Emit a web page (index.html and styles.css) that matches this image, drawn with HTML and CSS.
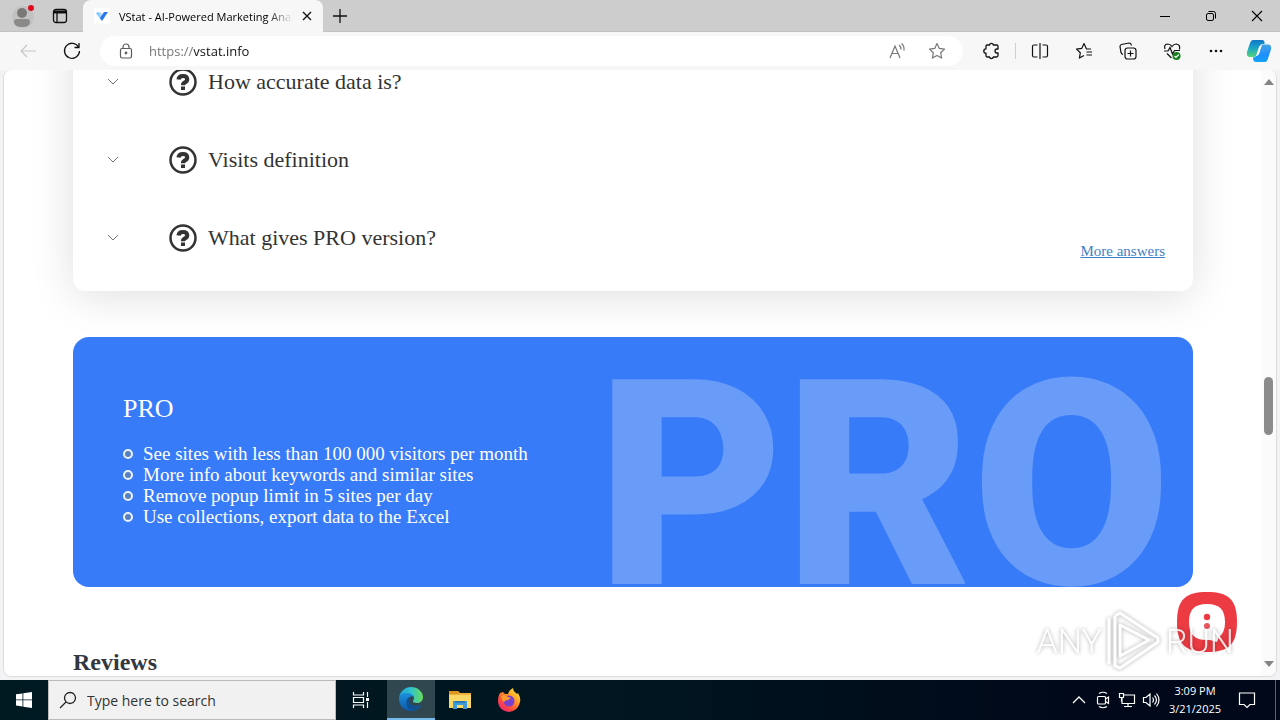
FILE: index.html
```html
<!DOCTYPE html>
<html lang="en">
<head>
<meta charset="utf-8">
<title>VStat - AI-Powered Marketing Analytics</title>
<link rel="stylesheet" href="styles.css">
</head>
<body>
<header class="titlebar">
  <button class="icon-btn profile" aria-label="Profile">
    <svg width="24" height="28" viewBox="0 0 24 28"><circle cx="12" cy="15" r="11" fill="#c2c2c2"/><circle cx="11" cy="11" r="5" fill="#7b7978"/><path d="M3 20q0-3 3-3h10q3 0 3 3 0 5-8 5t-8-5z" fill="#8c8a88"/><circle cx="20" cy="6" r="3" fill="#e00b1c"/></svg>
  </button>
  <button class="icon-btn tab-actions" aria-label="Tab actions">
    <svg width="16" height="16" viewBox="0 0 16 16" fill="none" stroke="#111" stroke-width="1.3"><rect x="1.5" y="1.5" width="13" height="13" rx="2.5"/><path d="M1.5 4h13" stroke-width="3"/><path d="M5 4v10"/></svg>
  </button>
  <div class="tab">
    <svg width="16" height="16" viewBox="0 0 16 16"><rect width="16" height="16" rx="2" fill="#fff"/><path d="M2 5l3-1 3 4-1 4z" fill="#7cc3ff"/><path d="M6 4l2 2-1 5-2-4z" fill="#a8d9ff"/><path d="M10 4l4 0-6 9-2-3z" fill="#2878ee"/></svg>
    <span class="tab-title">VStat - AI-Powered Marketing Analytics</span>
    <button class="icon-btn tab-close" aria-label="Close tab"><svg width="10" height="10" viewBox="0 0 10 10" stroke="#111" stroke-width="1.4"><path d="M1 1l8 8M9 1l-8 8"/></svg></button>
  </div>
  <button class="icon-btn new-tab" aria-label="New tab"><svg width="14" height="14" viewBox="0 0 14 14" stroke="#111" stroke-width="1.3"><path d="M7 0v14M0 7h14"/></svg></button>
  <div class="window-controls">
    <button class="icon-btn" aria-label="Minimize"><svg width="12" height="12" viewBox="0 0 12 12" stroke="#000"><path d="M1 6.500h10"/></svg></button>
    <button class="icon-btn" aria-label="Restore"><svg width="12" height="12" viewBox="0 0 12 12" fill="none" stroke="#000"><rect x="1.500" y="3.500" width="7" height="7" rx="1.500"/><path d="M3.500 1.500h5a2 2 0 0 1 2 2v5"/></svg></button>
    <button class="icon-btn" aria-label="Close"><svg width="12" height="12" viewBox="0 0 12 12" stroke="#000" stroke-width="1.100"><path d="M1 1l10 10M11 1L1 11"/></svg></button>
  </div>
</header>

<nav class="toolbar">
  <button class="icon-btn nav-btn" aria-label="Back"><svg width="18" height="18" viewBox="0 0 18 18" fill="none" stroke="#c6c6c6" stroke-width="1.200"><path d="M17 9H2M8 3L2 9l6 6"/></svg></button>
  <button class="icon-btn nav-btn" aria-label="Refresh"><svg width="18" height="18" viewBox="0 0 18 18" fill="none" stroke="#111" stroke-width="1.300"><path d="M15.500 5A7.500 7.500 0 1 0 16.500 9M16 1v4.500h-4.500"/></svg></button>
  <div class="address">
    <svg width="16" height="18" viewBox="0 0 16 18" fill="none" stroke="#5c5c5c" stroke-width="1.200"><rect x="2.500" y="6.500" width="11" height="9.500" rx="1.500"/><path d="M5 6.500V5a3 3 0 0 1 6 0v1.500"/><circle cx="8" cy="11" r=".8" fill="#5c5c5c"/></svg>
    <input class="url" type="text" aria-label="Address" value="https://vstat.info">
    <button class="icon-btn address-btn" aria-label="Read aloud"><svg width="18" height="18" viewBox="0 0 18 18" fill="none" stroke="#777" stroke-width="1.200"><path d="M2 16L7 4l5 12M4 11.500h6M11 3q2 1.500 2 4.500M13.500 1.500q3 2.500 2.500 7"/></svg></button>
    <button class="icon-btn address-btn" aria-label="Add to favorites"><svg width="18" height="18" viewBox="0 0 18 18" fill="none" stroke="#777" stroke-width="1.200" stroke-linejoin="round"><path d="M9 1.500l2.300 4.900 5.200.700-3.800 3.700.900 5.300L9 13.500l-4.600 2.600.900-5.300L1.500 7.100l5.200-.700z"/></svg></button>
  </div>
  <div class="tools">
    <button class="icon-btn tool" aria-label="Extensions"><svg width="18" height="18" viewBox="0 0 18 18" fill="none" stroke="#111" stroke-width="1.300" stroke-linejoin="round"><path d="M5 3h2.500a2 2 0 0 1 3.900 0h3.100q1.500 0 1.500 1.500V7h-1a2 2 0 0 0 0 4h1v2.500q0 1.500-1.500 1.500h-3.100a2 2 0 0 1-3.900 0H5.500Q4 15 4 13.500V11.200a2.200 2.200 0 0 1 0-4.400V4.500Q4 3 5 3z"/></svg></button>
    <span class="divider"></span>
    <button class="icon-btn tool" aria-label="Split screen"><svg width="18" height="18" viewBox="0 0 18 18" fill="none" stroke="#111" stroke-width="1.200"><path d="M9 1v16M6.500 3H3Q1.500 3 1.500 4.500v9Q1.500 15 3 15h3.500M11.500 3H15q1.500 0 1.500 1.500v9q0 1.500-1.500 1.500h-3.500"/></svg></button>
    <button class="icon-btn tool" aria-label="Favorites"><svg width="18" height="18" viewBox="0 0 18 18" fill="none" stroke="#111" stroke-width="1.200" stroke-linejoin="round"><path d="M16 7h-4.500L9 1.500 6.700 6.400l-5.200.700 3.800 3.700-.900 5.300L9 13.500M11.500 10H17M11.500 13H17"/></svg></button>
    <button class="icon-btn tool" aria-label="Collections"><svg width="18" height="18" viewBox="0 0 18 18" fill="none" stroke="#111" stroke-width="1.200"><rect x="6" y="6" width="11" height="11" rx="2.500"/><path d="M11.500 8.500v6M8.500 11.500h6M4 12.500q-1.500-.500-2-2L1 4.500Q1 3 2.500 2.500L10 1q2 0 2.500 2.500"/></svg></button>
    <button class="icon-btn tool" aria-label="Browser essentials"><svg width="18" height="18" viewBox="0 0 18 18" fill="none" stroke="#111" stroke-width="1.200"><path d="M2 7Q.5 2.500 4.500 2 7.500 2 9 4.500 10.500 2 13.500 2q4 .5 3 5.500M1 9h4l2-3.500L9.500 12l2-3.500H17M4 11.500l4.500 4.500"/><circle cx="13.500" cy="14" r="4" fill="#13801b" stroke="none"/><path d="M11.500 14l1.500 1.500 2.700-3" stroke="#fff"/></svg></button>
    <button class="icon-btn tool" aria-label="Settings and more"><svg width="18" height="18" viewBox="0 0 18 18" fill="#111"><circle cx="4" cy="9" r="1.300"/><circle cx="9" cy="9" r="1.300"/><circle cx="14" cy="9" r="1.300"/></svg></button>
    <button class="icon-btn copilot" aria-label="Copilot"><svg width="26" height="24" viewBox="0 0 26 24"><defs><linearGradient id="cp1" x1="0" y1="0" x2="0" y2="1"><stop offset="0" stop-color="#1276c8"/><stop offset=".45" stop-color="#19a3c8"/><stop offset="1" stop-color="#55d47a"/></linearGradient><linearGradient id="cp2" x1="0" y1="0" x2="0" y2="1"><stop offset="0" stop-color="#47a4e4"/><stop offset=".6" stop-color="#1d8fff"/><stop offset="1" stop-color="#14a4f5"/></linearGradient></defs><path d="M7 1h9q3 0 2.500 4h-2q-2 0-3 3l-2 7q-1 3-4 3H4q-4 0-3-5L4 4q1-3 3-3z" fill="url(#cp1)"/><path d="M19 23h-9q-3 0-3-4.500 3 0 4-3l2.500-7q1-3 4-3H22q4 0 3 5l-3 9q-1 3.500-3 3.500z" fill="url(#cp2)"/><path d="M11 14l2-6q1-2 3-2l-3 9q-1 2-3 2z" fill="#fff"/></svg></button>
  </div>
</nav>

<div class="browser-body">
  <div class="frame">
    <main class="page">
      <section class="faq">
        <div class="faq-row">
          <button class="question"><svg class="chevron" viewBox="0 0 12 8"><path d="M1 1l5 5 5-5"/></svg><svg class="help" viewBox="0 0 28 28"><circle cx="14" cy="14" r="12.500"/><path d="M9.500 11.500Q10 8 14 8t4.200 3.200q0 2-2.200 3.100-2 1-2 3"/><path class="help-dot" d="M12 18.500h4v3.500h-4z"/></svg>How accurate data is?</button>
        </div>
        <div class="faq-row">
          <button class="question"><svg class="chevron" viewBox="0 0 12 8"><path d="M1 1l5 5 5-5"/></svg><svg class="help" viewBox="0 0 28 28"><circle cx="14" cy="14" r="12.500"/><path d="M9.500 11.500Q10 8 14 8t4.200 3.200q0 2-2.200 3.100-2 1-2 3"/><path class="help-dot" d="M12 18.500h4v3.500h-4z"/></svg>Visits definition</button>
        </div>
        <div class="faq-row">
          <button class="question"><svg class="chevron" viewBox="0 0 12 8"><path d="M1 1l5 5 5-5"/></svg><svg class="help" viewBox="0 0 28 28"><circle cx="14" cy="14" r="12.500"/><path d="M9.500 11.500Q10 8 14 8t4.200 3.200q0 2-2.200 3.100-2 1-2 3"/><path class="help-dot" d="M12 18.500h4v3.500h-4z"/></svg>What gives PRO version?</button>
          <a class="more" href="#answers">More answers</a>
        </div>
      </section>

      <section class="pro">
        <div class="pro-info">
          <h2 class="pro-title">PRO</h2>
          <ul class="pro-list">
            <li>See sites with less than 100 000 visitors per month</li>
            <li>More info about keywords and similar sites</li>
            <li>Remove popup limit in 5 sites per day</li>
            <li>Use collections, export data to the Excel</li>
          </ul>
        </div>
        <div class="pro-mark" aria-hidden="true">PRO</div>
      </section>

      <h2 class="reviews">Reviews</h2>
    </main>
    <div class="scrollbar">
      <svg width="10" height="6" viewBox="0 0 10 6" fill="#858585"><path d="M5 0l5 6H0z"/></svg>
      <span class="before"></span><span class="thumb"></span><span class="after"></span>
      <svg width="10" height="6" viewBox="0 0 10 6" fill="#858585"><path d="M5 6l5-6H0z"/></svg>
    </div>
    <button class="chat" aria-label="Open chat"><svg width="60" height="60" viewBox="0 0 60 60"><path d="M30 0C51 0 60 7 60 30S51 60 30 60 0 53 0 30 9 0 30 0z" fill="#ed3b43"/><path d="M30 12c13 0 18 6 18 18 0 7-2 12-6 15l-2 5-7-2c-15 1-21-5-21-18 0-12 5-18 18-18z" fill="#fff"/><circle cx="30" cy="25" r="3.200" fill="#ed3b43"/><circle cx="30" cy="34" r="3" fill="#e8555c"/></svg></button>
    <div class="watermark"><span>ANY</span><svg width="56" height="62" viewBox="0 0 56 62" fill="none" stroke="#fff" stroke-width="3" stroke-linejoin="round"><path d="M3 8v46M9 6v51M14 15v31l29-16zM9 6l5-3 38 25v4L14 58l-5-2"/></svg><span>RUN</span></div>
  </div>
</div>

<footer class="taskbar">
  <button class="icon-btn start" aria-label="Start"><svg width="16" height="16" viewBox="0 0 16 16" fill="#fff"><path d="M0 2.300l6.500-.9v6.100H0zM7.300 1.300L16 0v7.500H7.300zM0 8.300h6.500v6.200L0 13.600zM7.300 8.300H16V16l-8.700-1.300z"/></svg></button>
  <label class="search"><svg width="18" height="18" viewBox="0 0 18 18" fill="none" stroke="#222" stroke-width="1.300"><circle cx="11" cy="7" r="5.500"/><path d="M7 11l-6 6"/></svg><input type="text" aria-label="Search" placeholder="Type here to search"></label>
  <button class="icon-btn task" aria-label="Task view"><svg width="18" height="18" viewBox="0 0 18 18" fill="none" stroke="#fff" stroke-width="1.200"><path d="M1.500 1v3h10V1M1.500 17v-3h10v3M1.500 6.500h10v5h-10zM15.500 1v5M15.500 11v6"/><path d="M14 7h3v3h-3z" fill="#fff" stroke="none"/></svg></button>
  <button class="icon-btn task active" aria-label="Microsoft Edge"><svg width="24" height="24" viewBox="0 0 24 24"><defs><linearGradient id="e1" x1="0" x2="1"><stop offset="0" stop-color="#1c9edb"/><stop offset=".5" stop-color="#31c4cb"/><stop offset="1" stop-color="#6bdc58"/></linearGradient><linearGradient id="e2" x1="0" y1="0" x2="0" y2="1"><stop offset="0" stop-color="#1c91dc"/><stop offset="1" stop-color="#0b57a6"/></linearGradient></defs><path d="M0 11C1 4 6 0 12 0c7 0 12 5 12 10 0 4-3 6-6 6-3 0-4.500-1-4-2 3-5-1-7-5-7-5 0-8 2-9 4z" fill="url(#e1)"/><path d="M0 12c0-4 4-6 8-6 4 0 7 2 7 5-1-2-3-2-4-1-3 3 0 9 5 9 3 0 5-1 6-1-2 4-6 6-10 6C5 24 0 19 0 12z" fill="url(#e2)"/><path d="M8 12c-2 6 1 11 6 11 3 0 6-2 8-5-2 1-4 1-6 1-4 0-6-3-6-6 0-2 1-3 1-3-1 0-2 1-3 2z" fill="#124f91"/></svg></button>
  <button class="icon-btn task" aria-label="File Explorer"><svg width="22" height="20" viewBox="0 0 22 20"><path d="M0 1h9l2 2h11v15H0z" fill="#efb035"/><path d="M0 5h22v13H0z" fill="#fbd766"/><path d="M0 1h9l1 2-1 1H0z" fill="#df9520"/><path d="M4 11h14v8h-4v-4H8v4H4z" fill="#3d9cdb"/><path d="M6 11h10v2H6z" fill="#2a7bb8"/></svg></button>
  <button class="icon-btn task" aria-label="Firefox"><svg width="24" height="24" viewBox="0 0 24 24"><defs><linearGradient id="f1" x1="1" y1="0" x2=".2" y2="1"><stop offset="0" stop-color="#fff14a"/><stop offset=".35" stop-color="#ffac28"/><stop offset=".7" stop-color="#ff5238"/><stop offset="1" stop-color="#e91e79"/></linearGradient></defs><path d="M3 5l3-1 2 2 3 0q1-4 5-6 0 3 3 5l1 1 1-1q3 5 2 9-2 9-11 10Q2 23 1 14 1 8 3 5z" fill="url(#f1)"/><circle cx="12" cy="13" r="5.500" fill="#7842cf"/><path d="M4 8q4-2 7 1l3 1-3 2q-3 0-4 2-2-1-3-6z" fill="#ff9b2b"/></svg></button>
  <div class="tray">
    <button class="icon-btn tray-btn" aria-label="Hidden icons"><svg width="14" height="8" viewBox="0 0 14 8" fill="none" stroke="#fff" stroke-width="1.300"><path d="M1 7l6-6 6 6"/></svg></button>
    <button class="icon-btn tray-btn" aria-label="Meet now"><svg width="16" height="18" viewBox="0 0 16 18" fill="none" stroke="#fff" stroke-width="1.200"><rect x="2.500" y="5.500" width="8" height="7.500" rx="1"/><path d="M10.500 8l3-2v6.500l-3-2M4 2.500Q8 0 12 2.500M4 15.500q4 2.500 8 0"/></svg></button>
    <button class="icon-btn tray-btn" aria-label="Network"><svg width="18" height="16" viewBox="0 0 18 16" fill="none" stroke="#fff" stroke-width="1.200"><path d="M6 3h10.500v8.500H4V6M10 11.500V14M6 14.500h8M1.500 1.500h4v4h-4zM3.500 5.500v4"/></svg></button>
    <button class="icon-btn tray-btn" aria-label="Volume"><svg width="18" height="16" viewBox="0 0 18 16" fill="none" stroke="#fff" stroke-width="1.200"><path d="M1.500 5.500H4L8 2v12l-4-3.500H1.500zM10.500 5.500q2 2.500 0 5M12.500 3.500q4 4.500 0 9M14.500 1.500q5 6.500 0 13"/></svg></button>
    <time class="clock" datetime="2025-03-21T15:09">3:09 PM<br>3/21/2025</time>
    <button class="icon-btn notify" aria-label="Notifications"><svg width="18" height="18" viewBox="0 0 18 18" fill="none" stroke="#fff" stroke-width="1.200"><path d="M1.500 2h15v11.500H12L9 16.500l-3-3H1.500z"/></svg></button>
    <span class="show-desktop"></span>
  </div>
</footer>
</body>
</html>
```

FILE: styles.css
```css
*, *::before { box-sizing: border-box; }

body {
  margin: 0;
  height: 100vh;
  display: flex;
  flex-direction: column;
  overflow: hidden;
  background: #f7f7f7;
  font-family: "Open Sans", "Noto Sans", sans-serif;
  color: #111;
}

svg { display: block; flex: none; }

.icon-btn {
  display: flex;
  align-items: center;
  justify-content: center;
  flex: none;
  padding: 0;
  border: 0;
  background: none;
}

/* Title bar */
.titlebar {
  display: flex;
  align-items: stretch;
  height: 32px;
  flex: none;
  background: #cdcdcd;
  border-bottom: 1px solid #c2c2c2;
}
.profile { width: 46px; }
.tab-actions { width: 28px; margin-right: 9px; }
.tab {
  display: flex;
  align-items: center;
  width: 240px;
  margin-bottom: -1px;
  padding: 0 6px 0 11px;
  background: #f7f7f7;
  border-radius: 8px 8px 0 0;
}
.tab-title {
  flex: 1;
  margin: 0 4px 0 9px;
  overflow: hidden;
  white-space: nowrap;
  font-size: 11px;
  color: #000;
  mask-image: linear-gradient(to right, #000 85%, transparent);
}
.tab-close { width: 20px; height: 20px; }
.new-tab { width: 34px; }
.window-controls { display: flex; margin-left: auto; }
.window-controls .icon-btn { width: 46px; }

/* Toolbar */
.toolbar {
  display: flex;
  align-items: center;
  height: 38px;
  flex: none;
  padding-left: 6px;
}
.nav-btn { width: 44px; height: 30px; }
.address {
  display: flex;
  align-items: center;
  flex: 1;
  height: 30px;
  margin-left: 6px;
  padding: 0 6px 0 18px;
  border-radius: 15px;
  background: #fff;
}
.url {
  flex: 1;
  min-width: 0;
  margin-left: 15px;
  padding: 0;
  border: 0;
  outline: 0;
  font: 13px "Open Sans", "Noto Sans", sans-serif;
  background: linear-gradient(to right, #707070 45px, #111 45px);
  background-clip: text;
  -webkit-text-fill-color: transparent;
}
.address-btn { width: 40px; height: 30px; }
.tools { display: flex; align-items: center; margin-left: 6px; }
.tool { width: 44px; height: 30px; }
.copilot { width: 42px; height: 30px; }
.divider { width: 1px; height: 16px; background: #cfcfcf; margin: 0 2px; }

/* Page */
.browser-body {
  flex: 1;
  min-height: 0;
  display: flex;
  padding: 0 3px 3px;
  background: #f3f3f5;
}
.frame {
  position: relative;
  flex: 1;
  display: flex;
  overflow: hidden;
  border: 1px solid #dcdcdc;
  border-top: 0;
  border-radius: 8px;
  background: #fff;
}
.page {
  flex: 1;
  min-width: 0;
  padding: 0 68px 0 69px;
  font-family: "Liberation Serif", serif;
}
.faq {
  margin-top: -127px;
  padding: 100px 28px 14px 34px;
  border-radius: 12px;
  background: #fff;
  box-shadow: 0 5px 44px rgba(0, 0, 0, .13);
}
.faq-row {
  display: flex;
  justify-content: space-between;
  height: 78px;
}
.question {
  display: flex;
  align-items: center;
  padding: 0;
  border: 0;
  background: none;
  font: 22px/28px "Liberation Serif", serif;
  color: #333;
}
.chevron { width: 12px; height: 8px; margin-right: 50px; fill: none; stroke: #777; stroke-width: 1; }
.help { width: 28px; height: 28px; margin-right: 11px; fill: none; stroke: #333; stroke-width: 2.5; }
.help path { stroke-width: 4.2; }
.help .help-dot { fill: #333; stroke: none; }
.more {
  align-self: flex-end;
  margin-bottom: 17px;
  font-size: 15px;
  line-height: 18px;
  color: #4380c8;
}

.pro {
  display: flex;
  justify-content: space-between;
  height: 250px;
  margin-top: 46px;
  padding: 0 22px 0 50px;
  overflow: hidden;
  border-radius: 16px;
  background: #377bf8;
  color: #fff;
}
.pro-info { padding-top: 57px; }
.pro-title {
  margin: 0 0 19px;
  font-size: 26px;
  line-height: 30px;
  font-weight: 400;
}
.pro-list {
  margin: 0;
  padding: 0;
  list-style: none;
  font-size: 19px;
  line-height: 21px;
  white-space: nowrap;
}
.pro-list li { display: flex; align-items: center; }
.pro-list li::before {
  content: "";
  width: 10px;
  height: 10px;
  margin-right: 10px;
  border: 2px solid #e9f3ff;
  border-radius: 50%;
  background: #5a7fc0;
}
.pro-mark {
  padding-top: 44px;
  font: 900 288px/210px Roboto, sans-serif;
  color: #699cf8;
}
.reviews {
  margin: 61px 0 0;
  font-size: 24px;
  line-height: 28px;
  color: #333840;
}

.scrollbar {
  flex: none;
  width: 15px;
  display: flex;
  flex-direction: column;
  align-items: center;
  padding: 9px 0;
  background: #fbfbfb;
}
.before { flex: 291; }
.thumb { flex: 58; width: 9px; border-radius: 5px; background: #8b8b8b; }
.after { flex: 225; }

.chat {
  position: absolute;
  right: 39px;
  bottom: 24px;
  padding: 0;
  border: 0;
  background: none;
}
.watermark {
  position: absolute;
  right: 42px;
  bottom: 4px;
  display: flex;
  align-items: center;
  gap: 4px;
  font: 300 34px/40px Roboto, sans-serif;
  color: #fff;
  opacity: .85;
  filter: drop-shadow(0 0 2px rgba(0, 0, 0, .4));
}

/* Taskbar */
.taskbar {
  display: flex;
  height: 40px;
  flex: none;
  background: linear-gradient(to right, #001a22, #00151f 50%, #000819 85%);
  color: #fff;
}
.start { width: 48px; }
.search {
  display: flex;
  align-items: center;
  width: 288px;
  padding: 0 10px;
  gap: 10px;
  background: #f1f1f1;
  border: 1px solid #bcbcbc;
}
.search input {
  flex: 1;
  min-width: 0;
  padding: 0;
  border: 0;
  outline: 0;
  background: none;
  font: 14px "Open Sans", "Noto Sans", sans-serif;
}
.search input::placeholder { color: #333; opacity: 1; }
.task { width: 49px; }
.active {
  width: 48px;
  margin-left: 2px;
  background: #304750;
  border-bottom: 2px solid #76b9ed;
}
.tray { display: flex; margin-left: auto; }
.tray-btn { width: 24px; }
.clock {
  align-self: center;
  width: 64px;
  font-size: 11px;
  line-height: 18px;
  text-align: center;
}
.notify { width: 40px; }
.show-desktop { width: 5px; margin-left: 8px; border-left: 1px solid #59606d; }
```
